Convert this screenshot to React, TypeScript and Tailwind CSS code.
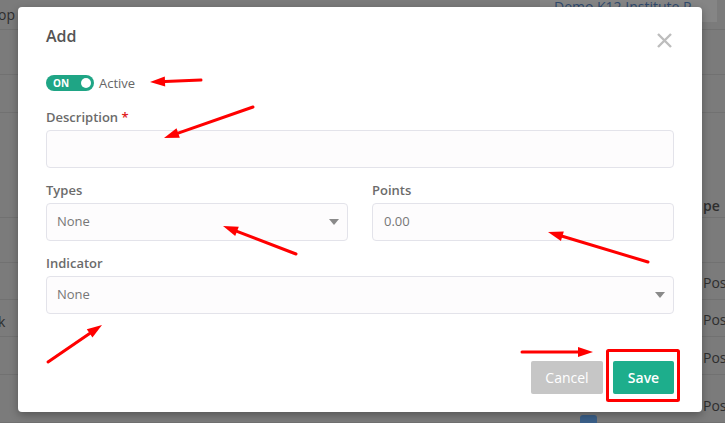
const rows = [
  { h: 'h-[30px]', left: 'op', right: '' },
  { h: 'h-[45px]', left: '', right: '' },
  { h: 'h-[38px]', left: '', right: '' },
  { h: 'h-[105px]', left: '', right: 'pe' },
  { h: 'h-[45px]', left: '', right: '' },
  { h: 'h-[37px]', left: '', right: 'Pos' },
  { h: 'h-[37px]', left: 'k', right: 'Pos' },
  { h: 'h-[38px]', left: '', right: 'Pos' },
  { h: 'h-[48px]', left: '', right: 'Pos' },
];

function Caret() {
  return (
    <svg width="10" height="6" viewBox="0 0 10 6" className="fill-[#8a8a8a]">
      <path d="M0 0h10L5 6z" />
    </svg>
  );
}

function Arrow({ x1, y1, x2, y2 }: { x1: number; y1: number; x2: number; y2: number }) {
  // arrowhead sits at (x2, y2)
  const a = Math.atan2(y2 - y1, x2 - x1);
  const len = 15;
  const w = 5;
  const bx = x2 - len * Math.cos(a);
  const by = y2 - len * Math.sin(a);
  const p1 = `${bx + w * Math.sin(a)},${by - w * Math.cos(a)}`;
  const p2 = `${bx - w * Math.sin(a)},${by + w * Math.cos(a)}`;
  return (
    <g>
      <line x1={x1} y1={y1} x2={bx} y2={by} stroke="#f00" strokeWidth="3" strokeLinecap="round" />
      <polygon points={`${x2},${y2} ${p1} ${p2}`} fill="#f00" />
    </g>
  );
}

export default function App() {
  return (
    <div className="relative w-[725px] h-[423px] overflow-hidden bg-[#7b7b7b] font-['Open_Sans',sans-serif]">
      {/* page behind the dimmed overlay */}
      <div className="flex flex-col">
        {rows.map((r, i) => (
          <div
            key={i}
            className={`${r.h} flex items-end justify-between border-b border-[#717171] text-[14px] text-[#2e2e2e]`}
          >
            <span className="pb-[4px] -ml-[2px]">{r.left}</span>
            <span className={`w-[22px] ${r.right === 'pe' ? 'font-semibold pb-[1px]' : 'pb-[6px]'}`}>{r.right}</span>
          </div>
        ))}
      </div>
      <div className="absolute left-[540px] top-0 w-[177px] h-[22px] bg-[#858585] pl-[14px] text-[14px] leading-[14px] text-[#2f4a6e] overflow-hidden">
        Demo K12 Institute P
      </div>
      <div className="absolute left-[580px] top-[415px] w-[17px] h-[12px] rounded-[3px] bg-[#3a5f88]" />

      {/* modal */}
      <div className="absolute left-[18px] top-[7px] w-[684px] h-[405px] rounded-[4px] bg-white shadow-[0_3px_9px_rgba(0,0,0,0.3)] px-[28px] pt-[18px]">
        <div className="flex h-[22px] items-center justify-between">
          <h2 className="text-[16px] leading-[22px] font-semibold text-[#555]">Add</h2>
          <svg width="15" height="15" viewBox="0 0 15 15" className="mr-[2px] mt-[8px] stroke-[#bdbdbd]" strokeWidth="2.4">
            <path d="M1 1l13 13M14 1L1 14" />
          </svg>
        </div>

        <div className="mt-[28px] flex h-[16px] items-center gap-[5px]">
          <div className="flex h-[16px] w-[48px] items-center justify-between rounded-full bg-[#1fa585] pl-[7px] pr-[3px]">
            <span className="text-[10px] font-bold leading-none text-white">ON</span>
            <span className="h-[10px] w-[10px] rounded-full bg-white" />
          </div>
          <span className="text-[13px] leading-[16px] text-[#666]">Active</span>
        </div>

        <div className="mt-[17px] text-[13px] leading-[18px] font-semibold text-[#6b6b6b]">
          Description <span className="text-[#e02020]">*</span>
        </div>
        <div className="mt-[4px] h-[38px] rounded-[4px] border border-[#e3e3ea] bg-[#fdfcfd]" />

        <div className="mt-[13px] grid grid-cols-2 gap-[24px]">
          <div>
            <div className="text-[13px] leading-[18px] font-semibold text-[#6b6b6b]">Types</div>
            <div className="mt-[4px] flex h-[38px] items-center justify-between rounded-[4px] border border-[#e3e3ea] bg-[#fdfcfd] pl-[10px] pr-[8px] text-[13px] text-[#777]">
              None
              <Caret />
            </div>
          </div>
          <div>
            <div className="text-[13px] leading-[18px] font-semibold text-[#6b6b6b]">Points</div>
            <div className="mt-[4px] flex h-[38px] items-center rounded-[4px] border border-[#e3e3ea] bg-[#fdfcfd] pl-[11px] text-[13px] text-[#777]">
              0.00
            </div>
          </div>
        </div>

        <div className="mt-[13px] text-[13px] leading-[18px] font-semibold text-[#6b6b6b]">Indicator</div>
        <div className="mt-[4px] flex h-[38px] items-center justify-between rounded-[4px] border border-[#e3e3ea] bg-[#fdfcfd] pl-[10px] pr-[8px] text-[13px] text-[#777]">
          None
          <Caret />
        </div>

        <div className="mt-[47px] flex justify-end gap-[10px]">
          <button className="h-[33px] w-[72px] rounded-[2px] bg-[#c6c6c6] text-[14px] text-white">Cancel</button>
          <button className="h-[33px] w-[61px] rounded-[2px] bg-[#1dae8c] text-[14px] font-semibold text-white">Save</button>
        </div>
      </div>

      {/* red annotations */}
      <svg className="absolute left-0 top-0" width="725" height="423">
        <Arrow x1={201} y1={80} x2={150} y2={82} />
        <Arrow x1={253} y1={107} x2={164} y2={138} />
        <Arrow x1={296} y1={254} x2={223} y2={226} />
        <Arrow x1={648} y1={262} x2={548} y2={232} />
        <Arrow x1={48} y1={362} x2={102} y2={325} />
        <Arrow x1={522} y1={352} x2={593} y2={352} />
        <rect x="607.5" y="350.5" width="71" height="50" fill="none" stroke="#f00" strokeWidth="3" rx="1" />
      </svg>
    </div>
  );
}
